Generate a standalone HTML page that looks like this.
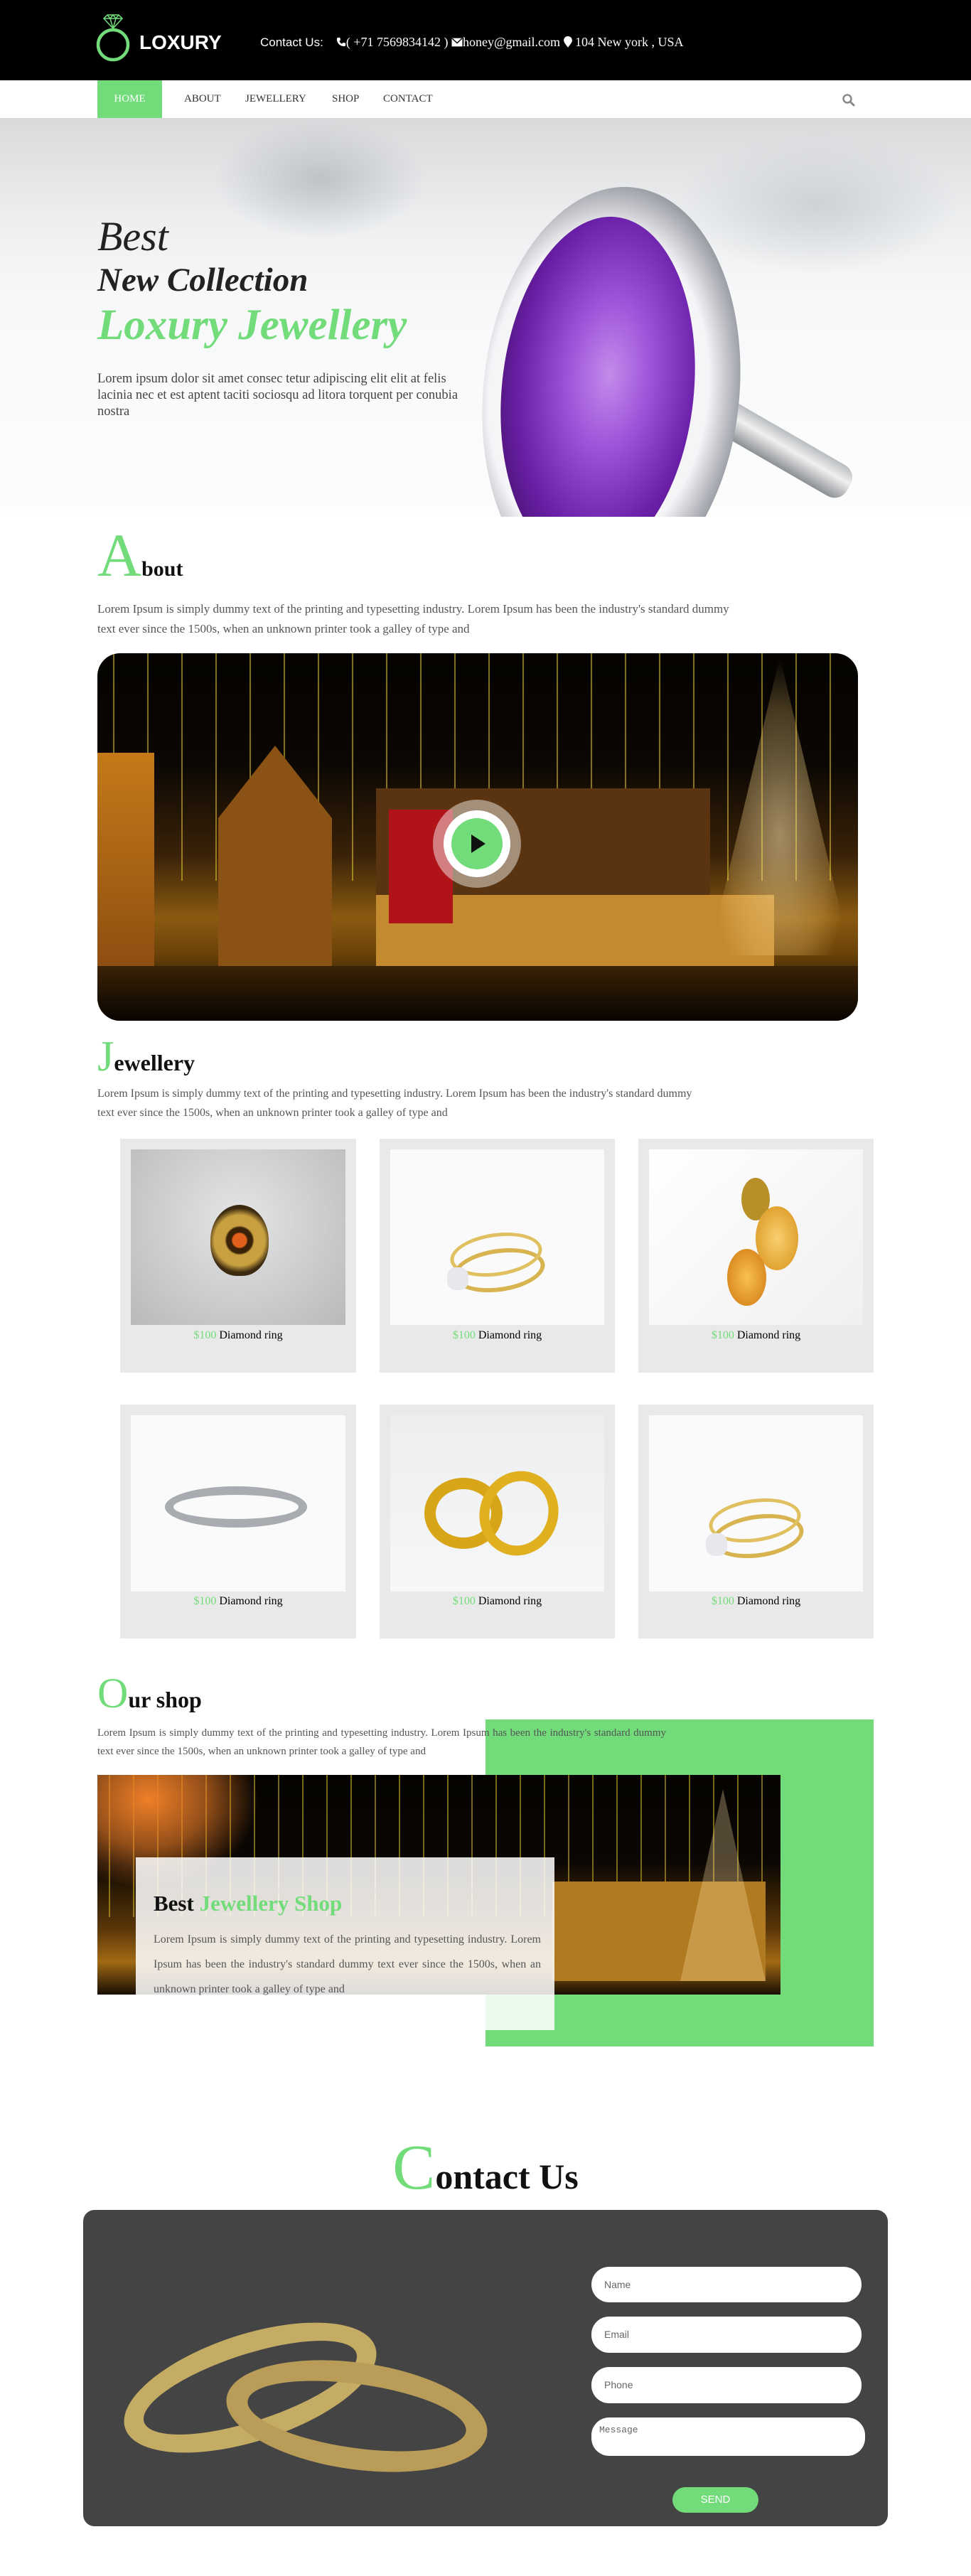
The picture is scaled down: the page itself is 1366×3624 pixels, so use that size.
<!DOCTYPE html>
<html><head><meta charset="utf-8">
<style>
*{margin:0;padding:0;box-sizing:border-box}
body{width:1366px;height:3624px;position:relative;background:#fff;font-family:"Liberation Serif",serif;overflow:hidden}
.a{position:absolute}
.g{color:#72dc7b}
.para{color:#555;font-size:17px;line-height:28px}
</style></head><body>

<!-- header -->
<div class="a" style="left:0;top:0;width:1366px;height:113px;background:#000"></div>
<svg class="a" style="left:132px;top:16px" width="56" height="76" viewBox="0 0 56 76">
 <circle cx="27" cy="47" r="21" fill="none" stroke="#72dc7b" stroke-width="4.5"/>
 <path d="M14 10 L19 5 H35 L40 10 L27 24 Z M14 10 H40 M19 5 L23 10 L27 5 L31 10 L35 5 M23 10 L27 24 L31 10" fill="none" stroke="#72dc7b" stroke-width="1.5"/>
 <path d="M22 26 H32" stroke="#72dc7b" stroke-width="3"/>
</svg>
<div class="a" style="left:196px;top:44px;color:#fff;font:bold 28px 'Liberation Sans',sans-serif">LOXURY</div>
<div class="a" style="left:366px;top:49px;color:#fff;font-size:18px;white-space:nowrap">
 <span style="font-family:'Liberation Sans',sans-serif;font-size:17px">Contact Us:</span>&nbsp;&nbsp;&nbsp;
 <svg width="14" height="14" viewBox="0 0 16 16" style="vertical-align:-1px"><path d="M3 1 L6 1 L7 5 L5 6.5 C6 9 7 10 9.5 11 L11 9 L15 10 L15 13 C15 14 14 15 13 15 C6 15 1 10 1 3 C1 2 2 1 3 1Z" fill="#fff"/></svg>( +71 7569834142 )
 <svg width="16" height="13" viewBox="0 0 15 12" style="vertical-align:-1px"><rect x="0.5" y="0.5" width="14" height="11" fill="#fff"/><path d="M1 1 L7.5 7 L14 1" fill="none" stroke="#000" stroke-width="1.3"/></svg>honey@gmail.com
 <svg width="12" height="16" viewBox="0 0 11 15" style="vertical-align:-2px"><path d="M5.5 0 C9 0 11 2.5 11 5.5 C11 9 7 12 5.5 15 C4 12 0 9 0 5.5 C0 2.5 2 0 5.5 0Z" fill="#fff"/></svg> 104 New york , USA
</div>

<!-- nav -->
<div class="a" style="left:137px;top:113px;width:91px;height:53px;background:#72dc7b;color:#fff;font-size:15px;line-height:53px;text-align:center">HOME</div>
<div class="a" style="left:259px;top:113px;line-height:53px;font-size:15px;color:#333">ABOUT</div>
<div class="a" style="left:345px;top:113px;line-height:53px;font-size:15px;color:#333">JEWELLERY</div>
<div class="a" style="left:467px;top:113px;line-height:53px;font-size:15px;color:#333">SHOP</div>
<div class="a" style="left:539px;top:113px;line-height:53px;font-size:15px;color:#333">CONTACT</div>
<svg class="a" style="left:1184px;top:131px" width="20" height="20" viewBox="0 0 20 20"><circle cx="8" cy="8" r="5.5" fill="none" stroke="#888" stroke-width="2.5"/><path d="M12 12 L17 17" stroke="#888" stroke-width="3" stroke-linecap="round"/></svg>

<!-- hero -->
<div class="a" style="left:0;top:166px;width:1366px;height:561px;overflow:hidden;background:linear-gradient(180deg,#d9dadc 0%,#eceef0 25%,#f7f8f9 45%,#fdfdfd 100%)">
 <div class="a" style="left:300px;top:0;width:300px;height:170px;background:radial-gradient(ellipse at center,#c0c3c6 0%,rgba(220,222,225,0) 70%)"></div>
 <div class="a" style="left:950px;top:20px;width:400px;height:200px;background:radial-gradient(ellipse at center,#cfd2d5 0%,rgba(230,232,234,0) 70%)"></div>
 <div class="a" style="left:960px;top:360px;width:270px;height:50px;background:linear-gradient(180deg,#b9bcbf,#f0f0f0 40%,#8c8f93);transform:rotate(30deg);transform-origin:left center;border-radius:20px"></div>
 <div class="a" style="left:680px;top:96px;width:360px;height:580px;border-radius:50%;background:radial-gradient(ellipse at 45% 50%,#f5f5f8 55%,#9a9ca4 72%,#e6e6ea 84%,#777 100%);transform:rotate(6deg)"></div>
 <div class="a" style="left:706px;top:138px;width:270px;height:490px;border-radius:50%;background:radial-gradient(ellipse at 55% 45%,#c58bea 0%,#9a4fd8 30%,#6a1fa8 60%,#2a0838 100%);transform:rotate(6deg)"></div>
</div>
<div class="a" style="left:137px;top:298px;font-size:58px;font-style:italic;color:#222;line-height:70px">Best</div>
<div class="a" style="left:137px;top:364px;font-size:47px;font-style:italic;font-weight:bold;color:#222;line-height:60px">New Collection</div>
<div class="a g" style="left:137px;top:420px;font-size:61px;font-style:italic;font-weight:bold;line-height:76px">Loxury Jewellery</div>
<div class="a" style="left:137px;top:522px;width:515px;font-size:18.5px;line-height:23px;color:#444">Lorem ipsum dolor sit amet consec tetur adipiscing elit elit at felis lacinia nec et est aptent taciti sociosqu ad litora torquent per conubia nostra</div>

<!-- about -->
<div class="a" style="left:137px;top:736px;line-height:90px;white-space:nowrap"><span class="g" style="font-size:86px">A</span><span style="font-size:30px;font-weight:bold;color:#111">bout</span></div>
<div class="a para" style="left:137px;top:843px;width:890px">Lorem Ipsum is simply dummy text of the printing and typesetting industry. Lorem Ipsum has been the industry's standard dummy text ever since the 1500s, when an unknown printer took a galley of type and</div>
<div class="a" style="left:137px;top:919px;width:1070px;height:517px;border-radius:32px;overflow:hidden;background:linear-gradient(180deg,#050301 0%,#0b0703 30%,#3a2208 55%,#8a5a10 72%,#6a4208 82%,#120a02 95%)">
 <div class="a" style="left:0;top:0;width:1070px;height:320px;background:repeating-linear-gradient(90deg,transparent 0 22px,rgba(230,200,40,.55) 22px 24px,transparent 24px 48px)"></div>
 <div class="a" style="left:0;top:140px;width:80px;height:330px;background:linear-gradient(180deg,#c47a18,#8a4a10)"></div>
 <div class="a" style="left:170px;top:130px;width:160px;height:340px;background:#8a5214;clip-path:polygon(0 30%,50% 0,100% 30%,100% 100%,0 100%)"></div>
 <div class="a" style="left:392px;top:340px;width:560px;height:140px;background:#c48a30"></div>
 <div class="a" style="left:392px;top:190px;width:470px;height:150px;background:#5a3410"></div>
 <div class="a" style="left:410px;top:220px;width:90px;height:160px;background:#b01418"></div>
 <div class="a" style="left:860px;top:5px;width:200px;height:420px;background:radial-gradient(ellipse at 50% 60%,rgba(255,230,170,.55),rgba(255,210,120,.25) 50%,transparent 70%);clip-path:polygon(50% 0,100% 100%,0 100%)"></div>
 <div class="a" style="left:0;top:440px;width:1070px;height:77px;background:linear-gradient(180deg,#3a2206,#080401)"></div>
 <div class="a" style="left:472px;top:206px;width:124px;height:124px;border-radius:50%;background:rgba(255,255,255,.45)"></div>
 <div class="a" style="left:487px;top:221px;width:94px;height:94px;border-radius:50%;background:#fff"></div>
 <div class="a" style="left:498px;top:232px;width:72px;height:72px;border-radius:50%;background:#72dc7b"></div>
 <svg class="a" style="left:526px;top:255px" width="20" height="26"><path d="M0 0 L20 13 L0 26Z" fill="#111"/></svg>
</div>

<!-- jewellery -->
<div class="a" style="left:137px;top:1456px;line-height:60px;white-space:nowrap"><span class="g" style="font-size:60px">J</span><span style="font-size:32px;font-weight:bold;color:#111">ewellery</span></div>
<div class="a para" style="left:137px;top:1525px;width:850px;font-size:16px;line-height:27px">Lorem Ipsum is simply dummy text of the printing and typesetting industry. Lorem Ipsum has been the industry's standard dummy text ever since the 1500s, when an unknown printer took a galley of type and</div>

<!-- cards row 1 -->
<div class="a" style="left:169px;top:1602px;width:332px;height:329px;background:#e9e9e9"></div>
<div class="a" style="left:534px;top:1602px;width:331px;height:329px;background:#e9e9e9"></div>
<div class="a" style="left:898px;top:1602px;width:331px;height:329px;background:#e9e9e9"></div>
<div class="a" style="left:184px;top:1617px;width:302px;height:247px;background:radial-gradient(ellipse at 50% 40%,#e4e5e7,#b8b9bb)">
 <div class="a" style="left:112px;top:78px;width:82px;height:100px;border-radius:50% 50% 45% 45%;background:radial-gradient(circle,#e0601c 0 15%,#3a2208 18% 28%,#c8a040 32% 55%,#3c2a10 70%)"></div></div>
<div class="a" style="left:549px;top:1617px;width:301px;height:247px;background:#fafafa">
 <div class="a" style="left:88px;top:140px;width:130px;height:60px;border:6px solid #d8b450;border-radius:50%;transform:rotate(-8deg)"></div>
 <div class="a" style="left:84px;top:118px;width:130px;height:60px;border:5px solid #e0c060;border-radius:50%;transform:rotate(-8deg)"></div>
 <div class="a" style="left:80px;top:166px;width:30px;height:32px;background:#e8e8ec;border-radius:40%"></div></div>
<div class="a" style="left:913px;top:1617px;width:301px;height:247px;background:linear-gradient(135deg,#fff,#f0f0f2)">
 <div class="a" style="left:130px;top:40px;width:40px;height:60px;border-radius:50%;background:#b89028"></div>
 <div class="a" style="left:150px;top:80px;width:60px;height:90px;border-radius:50%;background:radial-gradient(#f8d070,#d89018)"></div>
 <div class="a" style="left:110px;top:140px;width:55px;height:80px;border-radius:50%;background:radial-gradient(#f8c050,#d07810)"></div></div>
<div class="a" style="left:169px;top:1870px;width:332px;text-align:center;font-size:16px"><span class="g">$100</span> Diamond ring</div>
<div class="a" style="left:534px;top:1870px;width:331px;text-align:center;font-size:16px"><span class="g">$100</span> Diamond ring</div>
<div class="a" style="left:898px;top:1870px;width:331px;text-align:center;font-size:16px"><span class="g">$100</span> Diamond ring</div>

<!-- cards row 2 -->
<div class="a" style="left:169px;top:1976px;width:332px;height:329px;background:#e9e9e9"></div>
<div class="a" style="left:534px;top:1976px;width:331px;height:329px;background:#e9e9e9"></div>
<div class="a" style="left:898px;top:1976px;width:331px;height:329px;background:#e9e9e9"></div>
<div class="a" style="left:184px;top:1991px;width:302px;height:248px;background:#fafafa">
 <div class="a" style="left:48px;top:100px;width:200px;height:58px;border:12px solid #a8abb0;border-radius:50%"></div></div>
<div class="a" style="left:549px;top:1991px;width:301px;height:248px;background:linear-gradient(180deg,#eceef0,#f6f7f8)">
 <div class="a" style="left:48px;top:88px;width:110px;height:100px;border:16px solid #d8a418;border-radius:50%"></div>
 <div class="a" style="left:126px;top:78px;width:110px;height:120px;border:14px solid #e0b020;border-radius:50%;transform:rotate(20deg)"></div></div>
<div class="a" style="left:913px;top:1991px;width:301px;height:248px;background:#fafafa">
 <div class="a" style="left:88px;top:140px;width:130px;height:60px;border:6px solid #d8b450;border-radius:50%;transform:rotate(-8deg)"></div>
 <div class="a" style="left:84px;top:118px;width:130px;height:60px;border:5px solid #e0c060;border-radius:50%;transform:rotate(-8deg)"></div>
 <div class="a" style="left:80px;top:166px;width:30px;height:32px;background:#e8e8ec;border-radius:40%"></div></div>
<div class="a" style="left:169px;top:2244px;width:332px;text-align:center;font-size:16px"><span class="g">$100</span> Diamond ring</div>
<div class="a" style="left:534px;top:2244px;width:331px;text-align:center;font-size:16px"><span class="g">$100</span> Diamond ring</div>
<div class="a" style="left:898px;top:2244px;width:331px;text-align:center;font-size:16px"><span class="g">$100</span> Diamond ring</div>

<!-- our shop -->
<div class="a" style="left:137px;top:2352px;line-height:60px;white-space:nowrap"><span class="g" style="font-size:60px">O</span><span style="font-size:32px;font-weight:bold;color:#111">ur shop</span></div>
<div class="a" style="left:683px;top:2419px;width:546px;height:460px;background:#72dc7b"></div>
<div class="a para" style="left:137px;top:2425px;width:800px;font-size:15px;line-height:26px;text-align:justify;text-align-last:left">Lorem Ipsum is simply dummy text of the printing and typesetting industry. Lorem Ipsum has been the industry's standard dummy text ever since the 1500s, when an unknown printer took a galley of type and</div>
<div class="a" style="left:137px;top:2497px;width:961px;height:309px;overflow:hidden;background:linear-gradient(180deg,#050301 0%,#0b0703 40%,#5a3608 70%,#a06a14 85%,#1a0e02 100%)">
 <div class="a" style="left:0;top:0;width:961px;height:200px;background:repeating-linear-gradient(90deg,transparent 0 16px,rgba(230,200,40,.5) 16px 18px,transparent 18px 34px)"></div>
 <div class="a" style="left:0;top:0;width:240px;height:170px;background:radial-gradient(ellipse at 30% 20%,#f08028 0%,rgba(240,128,40,.6) 35%,transparent 65%)"></div>
 <div class="a" style="left:640px;top:150px;width:300px;height:140px;background:#b07a20"></div>
 <div class="a" style="left:820px;top:20px;width:120px;height:270px;background:rgba(255,225,170,.3);clip-path:polygon(50% 0,100% 100%,0 100%)"></div>
</div>
<div class="a" style="left:191px;top:2613px;width:589px;height:243px;background:rgba(255,255,255,.86)"></div>
<div class="a" style="left:216px;top:2660px;font-size:31px;font-weight:bold;color:#111;white-space:nowrap">Best <span class="g">Jewellery Shop</span></div>
<div class="a" style="left:216px;top:2711px;width:545px;font-size:16px;line-height:35px;color:#555;text-align:justify;text-align-last:left">Lorem Ipsum is simply dummy text of the printing and typesetting industry. Lorem Ipsum has been the industry's standard dummy text ever since the 1500s, when an unknown printer took a galley of type and</div>

<!-- contact -->
<div class="a" style="left:0;top:3010px;width:1366px;text-align:center;white-space:nowrap;line-height:80px"><span class="g" style="font-size:90px">C</span><span style="font-size:50px;font-weight:bold;color:#111">ontact Us</span></div>
<div class="a" style="left:117px;top:3109px;width:1132px;height:445px;background:#444;border-radius:16px;overflow:hidden">
 <div class="a" style="left:50px;top:175px;width:370px;height:150px;border:28px solid #c4ac64;border-radius:50%;transform:rotate(-18deg)"></div>
 <div class="a" style="left:200px;top:215px;width:370px;height:150px;border:30px solid #b89c58;border-radius:50%;transform:rotate(8deg)"></div>
</div>
<div class="a" style="left:832px;top:3189px;width:380px;height:50px;background:#fff;border-radius:25px;font:14px 'Liberation Sans',sans-serif;color:#666;line-height:50px;padding-left:18px">Name</div>
<div class="a" style="left:832px;top:3259px;width:380px;height:51px;background:#fff;border-radius:25px;font:14px 'Liberation Sans',sans-serif;color:#666;line-height:51px;padding-left:18px">Email</div>
<div class="a" style="left:832px;top:3330px;width:380px;height:51px;background:#fff;border-radius:25px;font:14px 'Liberation Sans',sans-serif;color:#666;line-height:51px;padding-left:18px">Phone</div>
<div class="a" style="left:832px;top:3401px;width:385px;height:54px;background:#fff;border-radius:25px;font:13px 'Liberation Mono',monospace;color:#666;padding:10px 0 0 11px">Message</div>
<div class="a" style="left:946px;top:3499px;width:121px;height:36px;background:#72dc7b;border-radius:18px;color:#fff;font:15px 'Liberation Sans',sans-serif;line-height:36px;text-align:center">SEND</div>
</body></html>
